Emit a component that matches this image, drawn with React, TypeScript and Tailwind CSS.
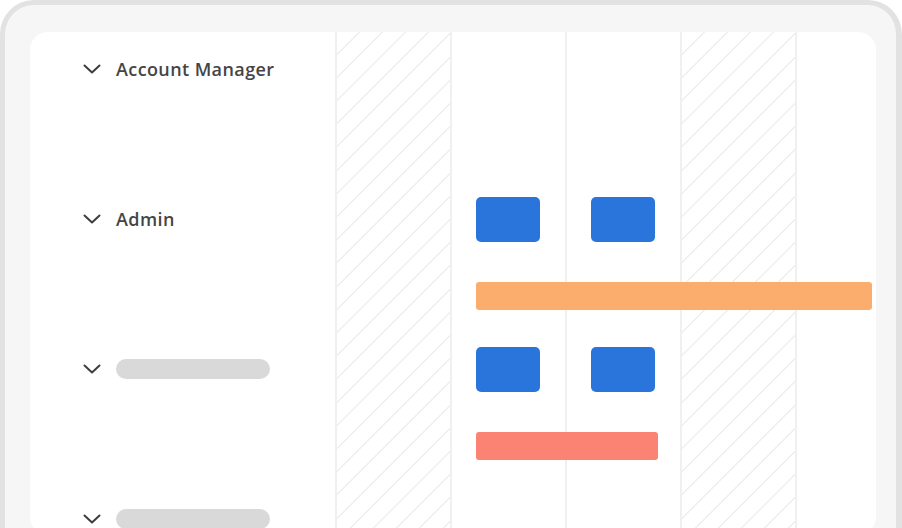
import React from "react";

const rows = [
  { label: "Account Manager" },
  { label: "Admin" },
  { label: null },
  { label: null },
];

const cols = [true, false, false, true, false];

const Chevron = () => (
  <svg width="18" height="10" viewBox="0 0 18 10" className="shrink-0">
    <polyline points="1.5,1.5 9,8.5 16.5,1.5" fill="none" stroke="#3d3d3d" strokeWidth="2" strokeLinecap="round" strokeLinejoin="round" />
  </svg>
);

const App = () => {
  return (
    <div className="w-[902px] h-[528px] overflow-hidden bg-white" style={{ fontFamily: "'Open Sans', Lato, sans-serif" }}>
      <div className="h-[600px] rounded-[34px] border-l-[5px] border-r-[6px] border-t-[5px] border-[#e2e2e2] bg-[#f6f6f6] pt-[27px] pl-[25px] pr-[20px]">
        <div className="flex h-[503px] overflow-hidden rounded-[18px] bg-white">
          {/* left labels */}
          <div className="flex w-[305px] shrink-0 flex-col gap-[120px] pl-[53px] pt-[22px]">
            {rows.map((r, i) => (
              <div key={i} className="flex h-[30px] items-center gap-[15px]">
                <Chevron />
                {r.label ? (
                  <span className="text-[18px] font-semibold tracking-[0.4px] text-[#454545]">{r.label}</span>
                ) : (
                  <div className="h-[20px] w-[154px] rounded-full bg-[#d9d9d9]" />
                )}
              </div>
            ))}
          </div>

          {/* timeline */}
          <div className="relative flex-1">
            <div className="flex h-full">
              {cols.map((hatched, i) => (
                <div
                  key={i}
                  className={`h-full w-[115px] shrink-0 border-l-2 border-[#f0f0f0] ${
                    hatched ? "bg-[repeating-linear-gradient(135deg,transparent_0_15px,#efefef_15px_16.4px)]" : ""
                  }`}
                />
              ))}
            </div>

            <div className="absolute inset-0 flex flex-col pl-[141px] pt-[165px]">
              <div className="flex gap-[51px]">
                <div className="h-[45px] w-[64px] rounded-[5px] bg-[#2a75db]" />
                <div className="h-[45px] w-[64px] rounded-[5px] bg-[#2a75db]" />
              </div>
              <div className="mt-[40px] h-[28px] w-[396px] rounded-[3px] bg-[#fbad6d]" />
              <div className="mt-[37px] flex gap-[51px]">
                <div className="h-[45px] w-[64px] rounded-[5px] bg-[#2a75db]" />
                <div className="h-[45px] w-[64px] rounded-[5px] bg-[#2a75db]" />
              </div>
              <div className="mt-[40px] h-[28px] w-[182px] rounded-[3px] bg-[#fb8373]" />
            </div>
          </div>
        </div>
      </div>
    </div>
  );
};

export default App;
